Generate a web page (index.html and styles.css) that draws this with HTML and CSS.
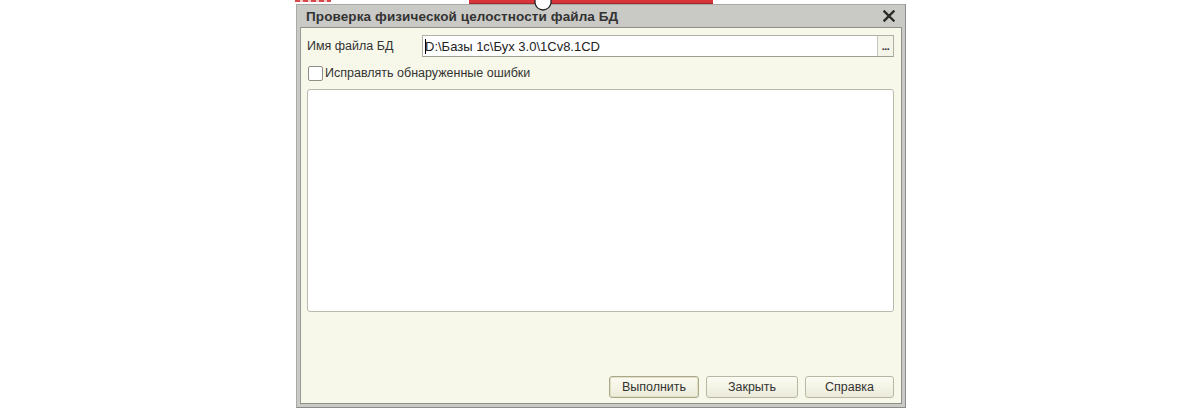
FILE: index.html
```html
<!DOCTYPE html>
<html lang="ru">
<head>
<meta charset="utf-8">
<link rel="stylesheet" href="styles.css">
</head>
<body>
<div class="page">
  <div class="backdrop">
    <span class="red-text"></span>
    <span class="red-bar"></span>
  </div>
  <div class="dialog">
    <div class="titlebar">
      <span class="title">Проверка физической целостности файла БД</span>
      <svg class="close" width="12" height="12" viewBox="0 0 12 12"><path d="M1.5 1.5 L10.5 10.5 M10.5 1.5 L1.5 10.5" stroke="#2a2a2a" stroke-width="2.4" stroke-linecap="square"/></svg>
    </div>
    <div class="body">
      <div class="row">
        <span class="label">Имя файла БД</span>
        <div class="input">
          <span class="input-text"><span class="caret"></span>D:\Базы 1с\Бух 3.0\1Cv8.1CD</span>
          <span class="dots">...</span>
        </div>
      </div>
      <label class="check-row">
        <span class="checkbox"></span>
        <span class="check-label">Исправлять обнаруженные ошибки</span>
      </label>
      <div class="log"></div>
      <div class="buttons">
        <span class="btn btn-default">Выполнить</span>
        <span class="btn">Закрыть</span>
        <span class="btn btn-help">Справка</span>
      </div>
    </div>
  </div>
  <svg class="cursor" width="18" height="12" viewBox="0 0 18 12"><path d="M1 0 L1 4 Q2 10 9 11 Q16 10 17 4 L17 0" fill="#ffffff" stroke="#222" stroke-width="1.3"/></svg>
</div>
</body>
</html>
```
FILE: styles.css
```css
html, body {
  margin: 0;
  padding: 0;
  background: #ffffff;
}
.page {
  position: relative;
  width: 1200px;
  height: 411px;
  overflow: hidden;
  font-family: "Liberation Sans", Arial, sans-serif;
}
.backdrop {
  height: 4px;
  display: flex;
  align-items: flex-start;
}
.red-text {
  margin-left: 295px;
  width: 36px;
  height: 2px;
  background: repeating-linear-gradient(90deg, #d84a4a 0 5px, #f3c9c9 5px 8px);
}
.red-bar {
  margin-left: 138px;
  width: 244px;
  height: 3px;
  background: #d9343a;
  border-bottom: 1px solid #a02a2a;
}
.dialog {
  margin-left: 296px;
  width: 610px;
  height: 404px;
  box-sizing: border-box;
  background: #c9c9c5;
  border: 1px solid #a9a9a5;
  border-right-color: #8c8c8a;
  border-bottom-color: #8c8c8a;
  padding: 0 3px 3px 3px;
  display: flex;
  flex-direction: column;
}
.titlebar {
  height: 22px;
  flex: none;
  display: flex;
  align-items: center;
  justify-content: space-between;
  padding: 0 7px 0 6px;
}
.title {
  font-weight: bold;
  font-size: 13.5px;
  color: #333333;
  letter-spacing: 0.1px;
}
.body {
  flex: 1;
  background: #f8f8ea;
  border: 1px solid #8f8f8c;
  border-left-color: #9a9a98;
  padding: 7px 7px 5px 6px;
  display: flex;
  flex-direction: column;
}
.row {
  display: flex;
  align-items: center;
  height: 22px;
}
.label, .check-label, .btn {
  font-size: 12.5px;
  color: #333333;
}
.input-text {
  font-size: 13px;
}
.label {
  width: 115px;
  flex: none;
}
.input {
  flex: 1;
  height: 22px;
  box-sizing: border-box;
  background: #ffffff;
  border: 1px solid #b0b0a6;
  border-bottom-color: #9d9d95;
  display: flex;
  align-items: center;
}
.input-text {
  flex: 1;
  padding-left: 2px;
  display: flex;
  align-items: center;
  color: #222222;
}
.caret {
  width: 1px;
  height: 15px;
  background: #000;
  margin-right: -1px;
}
.dots {
  width: 16px;
  height: 20px;
  box-sizing: border-box;
  border-left: 1px solid #c5c5b8;
  background: #f4f4e8;
  font-size: 11px;
  font-weight: bold;
  color: #333;
  display: flex;
  align-items: center;
  justify-content: center;
  letter-spacing: -0.5px;
}
.check-row {
  display: flex;
  align-items: center;
  margin-top: 8px;
  height: 16px;
}
.checkbox {
  width: 13px;
  height: 13px;
  border: 1px solid #8f8f88;
  border-radius: 2px;
  background: #ffffff;
  margin-left: 1px;
  margin-right: 2px;
}
.log {
  margin-top: 8px;
  height: 223px;
  background: #ffffff;
  border: 1px solid #b9b9ae;
  border-radius: 3px;
  box-sizing: border-box;
}
.buttons {
  margin-top: auto;
  display: flex;
  justify-content: flex-end;
  gap: 7px;
}
.btn {
  height: 22px;
  box-sizing: border-box;
  border: 1px solid #b8b8a4;
  border-radius: 3px;
  background: linear-gradient(#fbfbf2, #ecebd9);
  display: flex;
  align-items: center;
  justify-content: center;
  width: 92px;
}
.btn-default {
  width: 90px;
  border-color: #a9a88c;
  box-shadow: inset 0 0 0 1px #e2e0c2;
}
.btn-help {
  width: 89px;
}
.cursor {
  position: absolute;
  left: 534px;
  top: -1px;
}
```
